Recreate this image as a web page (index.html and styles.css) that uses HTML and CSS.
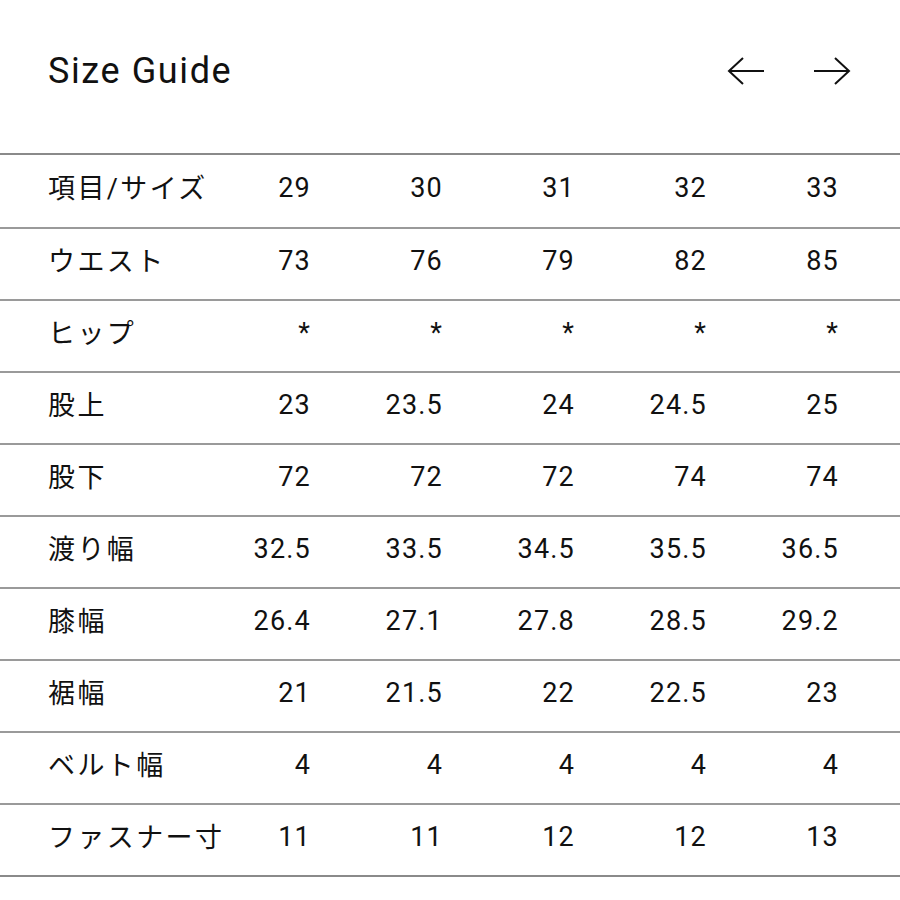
FILE: index.html
```html
<!DOCTYPE html>
<html lang="ja">
<head>
<meta charset="utf-8">
<link rel="stylesheet" href="styles.css">
</head>
<body>
<div class="page">
  <header class="head">
    <h1 class="title">Size Guide</h1>
    <div class="nav">
      <svg class="arrow" width="38" height="28" viewBox="0 0 38 28"><path d="M37 14H2M16 1L2 14L16 27" fill="none" stroke="#111" stroke-width="2"/></svg>
      <svg class="arrow" width="38" height="28" viewBox="0 0 38 28"><path d="M1 14H36M22 1L36 14L22 27" fill="none" stroke="#111" stroke-width="2"/></svg>
    </div>
  </header>
  <div class="table">
    <div class="row first"><div class="label">項目/サイズ</div><div class="cell">29</div><div class="cell">30</div><div class="cell">31</div><div class="cell">32</div><div class="cell">33</div></div>
    <div class="row"><div class="label">ウエスト</div><div class="cell">73</div><div class="cell">76</div><div class="cell">79</div><div class="cell">82</div><div class="cell">85</div></div>
    <div class="row"><div class="label">ヒップ</div><div class="cell">*</div><div class="cell">*</div><div class="cell">*</div><div class="cell">*</div><div class="cell">*</div></div>
    <div class="row"><div class="label">股上</div><div class="cell">23</div><div class="cell">23.5</div><div class="cell">24</div><div class="cell">24.5</div><div class="cell">25</div></div>
    <div class="row"><div class="label">股下</div><div class="cell">72</div><div class="cell">72</div><div class="cell">72</div><div class="cell">74</div><div class="cell">74</div></div>
    <div class="row"><div class="label">渡り幅</div><div class="cell">32.5</div><div class="cell">33.5</div><div class="cell">34.5</div><div class="cell">35.5</div><div class="cell">36.5</div></div>
    <div class="row"><div class="label">膝幅</div><div class="cell">26.4</div><div class="cell">27.1</div><div class="cell">27.8</div><div class="cell">28.5</div><div class="cell">29.2</div></div>
    <div class="row"><div class="label">裾幅</div><div class="cell">21</div><div class="cell">21.5</div><div class="cell">22</div><div class="cell">22.5</div><div class="cell">23</div></div>
    <div class="row"><div class="label">ベルト幅</div><div class="cell">4</div><div class="cell">4</div><div class="cell">4</div><div class="cell">4</div><div class="cell">4</div></div>
    <div class="row last"><div class="label">ファスナー寸</div><div class="cell">11</div><div class="cell">11</div><div class="cell">12</div><div class="cell">12</div><div class="cell">13</div></div>
  </div>
</div>
</body>
</html>
```

FILE: styles.css
```css
html, body {
  margin: 0;
  padding: 0;
  background: #fff;
}
body {
  font-family: Roboto, "Noto Sans CJK JP", sans-serif;
  color: #111;
}
.page {
  width: 900px;
}
.head {
  height: 153px;
  box-sizing: border-box;
  padding: 0 49px 0 48px;
  display: flex;
  justify-content: space-between;
  align-items: flex-start;
}
.title {
  margin: 0;
  padding-top: 50px;
  font-size: 36px;
  font-weight: 400;
  letter-spacing: 1.6px;
  line-height: 42px;
}
.nav {
  display: flex;
  gap: 48px;
  padding-top: 57px;
}
.arrow {
  display: block;
}
.table {
  border-top: 2px solid #8a8a8a;
}
.row {
  display: grid;
  grid-template-columns: 179px repeat(5, 132px);
  align-items: center;
  height: 72px;
  box-sizing: border-box;
  border-bottom: 2px solid #9a9a9a;
  font-size: 27px;
  letter-spacing: 1.2px;
}
.row.first {
  height: 74px;
}
.row.last {
  border-bottom-color: #8a8a8a;
}
.label {
  padding-left: 48px;
  white-space: nowrap;
  padding-bottom: 9px;
  letter-spacing: 2.4px;
}
.cell {
  text-align: right;
  padding-bottom: 6px;
}
```
